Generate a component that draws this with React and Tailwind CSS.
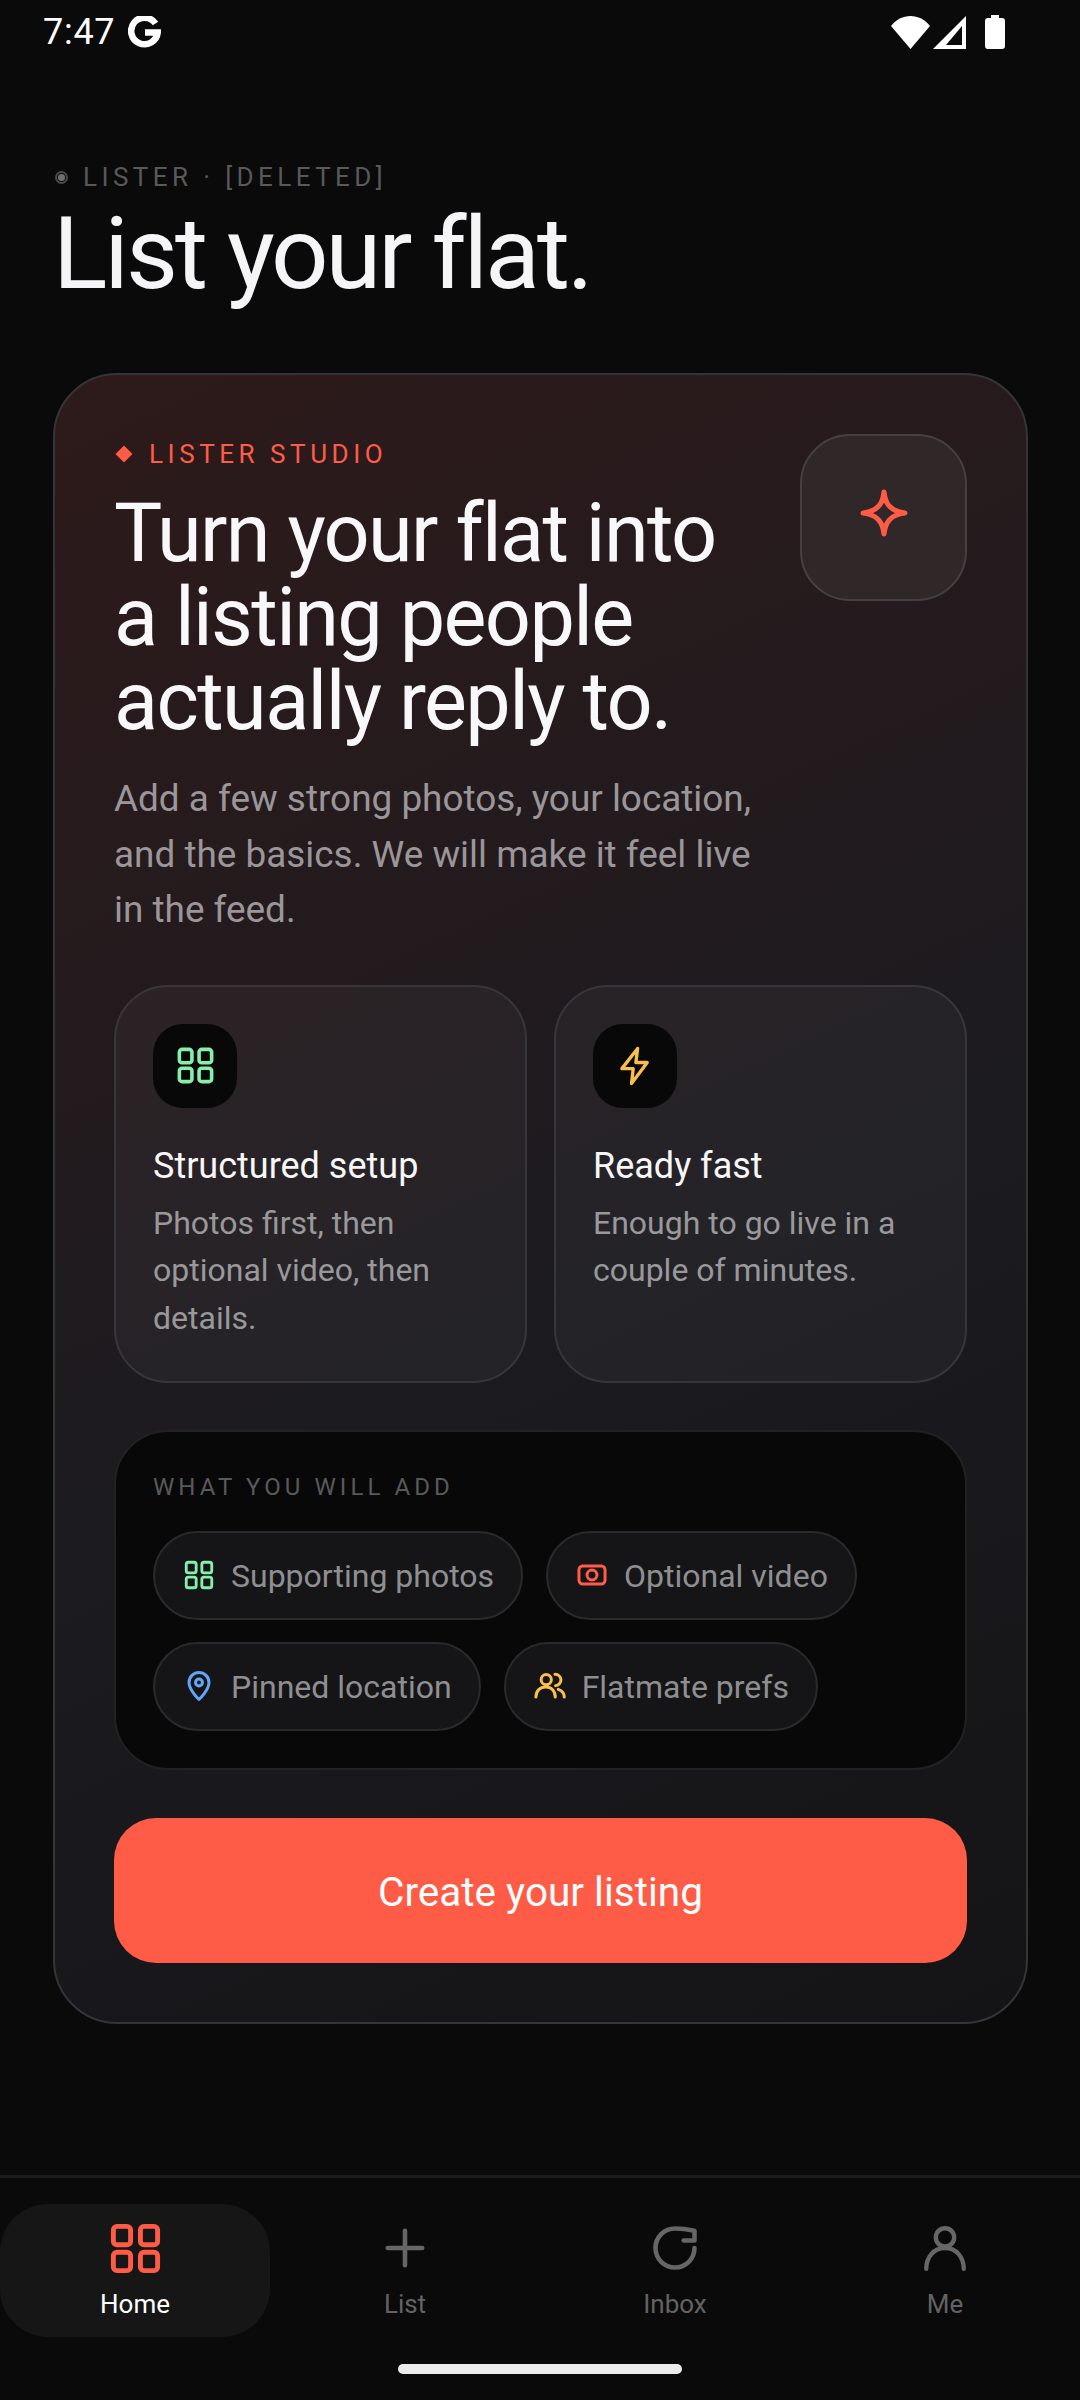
import React from "react";

const GridIcon = ({ className }) => (
  <svg viewBox="0 0 24 24" fill="none" stroke="currentColor" strokeWidth="2" strokeLinejoin="round" className={className}>
    <rect x="3" y="3" width="7" height="7.5" rx="1.5" />
    <rect x="14" y="3" width="7" height="7.5" rx="1.5" />
    <rect x="3" y="13.5" width="7" height="7.5" rx="1.5" />
    <rect x="14" y="13.5" width="7" height="7.5" rx="1.5" />
  </svg>
);

const BoltIcon = ({ className }) => (
  <svg viewBox="0 0 24 24" fill="none" stroke="currentColor" strokeWidth="1.9" strokeLinecap="round" strokeLinejoin="round" className={className}>
    <path d="M13.5 2 4.5 13.5h6.5L10 22l9-12h-6.5L13.5 2Z" />
  </svg>
);

const SparkIcon = ({ className }) => (
  <svg viewBox="0 0 24 24" fill="none" stroke="currentColor" strokeWidth="2.5" strokeLinejoin="round" className={className}>
    <path d="M12 2c.6 6 3.4 9.2 10 10-6.6.8-9.4 4-10 10-.6-6-3.4-9.2-10-10 6.6-.8 9.4-4 10-10Z" />
  </svg>
);

const VideoIcon = ({ className }) => (
  <svg viewBox="0 0 24 24" fill="none" stroke="currentColor" strokeWidth="2" className={className}>
    <rect x="3.3" y="6" width="17.4" height="12" rx="2.5" />
    <circle cx="12" cy="12" r="3.3" />
  </svg>
);

const PinIcon = ({ className }) => (
  <svg viewBox="0 0 24 24" fill="none" stroke="currentColor" strokeWidth="2" strokeLinejoin="round" className={className}>
    <path d="M12 21s-6.65-6.2-6.65-11.35a6.65 6.65 0 0 1 13.3 0C18.65 14.8 12 21 12 21Z" />
    <circle cx="12" cy="9.65" r="2.3" />
  </svg>
);

const PeopleIcon = ({ className }) => (
  <svg viewBox="0 0 24 24" fill="none" stroke="currentColor" strokeWidth="2" strokeLinecap="round" className={className}>
    <circle cx="9.5" cy="7.75" r="3.4" />
    <path d="M2.6 19.3c0-4 2.8-6.7 6.6-6.7s6.3 2.7 6.3 6.7" />
    <path d="M15.3 4.2a3.7 3.7 0 0 1 .4 7.55" />
    <path d="M17.5 14.2c2.4.8 4 2.6 4 5.1" />
  </svg>
);

const PlusIcon = ({ className }) => (
  <svg viewBox="0 0 24 24" fill="none" stroke="currentColor" strokeWidth="2.4" strokeLinecap="round" className={className}>
    <path d="M12 3v18M3 12h18" />
  </svg>
);

const InboxIcon = ({ className }) => (
  <svg viewBox="0 0 24 24" fill="none" stroke="currentColor" strokeWidth="2.1" strokeLinecap="round" strokeLinejoin="round" className={className}>
    <path d="M21 12a9 9 0 1 1-9-9c3 0 6 .4 9 1v4.5h-5" />
  </svg>
);

const PersonIcon = ({ className }) => (
  <svg viewBox="0 0 24 24" fill="none" stroke="currentColor" strokeWidth="2.1" strokeLinecap="round" className={className}>
    <circle cx="12" cy="6.9" r="4.4" />
    <path d="M3 22c0-5.5 3.5-10 9-10s9 4.5 9 10" />
  </svg>
);

const StatusBar = () => (
  <div className="flex items-center justify-between h-[62px] pl-[43px] pr-[75px] pt-[2px] text-white">
    <div className="flex items-center gap-[13px]">
      <span className="text-[36px] leading-none tracking-[0.02em]">7:47</span>
      <svg viewBox="0 0 33 33" fill="none" stroke="currentColor" strokeWidth="6.5" className="w-[33px] h-[33px]">
        <path d="M27.5 7.5A13.3 13.3 0 1 0 29.7 16.5H17" />
      </svg>
    </div>
    <div className="flex items-center">
      <svg viewBox="0 0 39 33" className="w-[39px] h-[33px] fill-white">
        <path d="M0 10C5 3.5 12 0 19.5 0S34 3.5 39 10L19.5 33Z" />
      </svg>
      <svg viewBox="0 0 33 33" className="ml-[3px] w-[33px] h-[33px] fill-white">
        <path fillRule="evenodd" d="M33 0v33H0ZM29 10 13 29h16Z" />
      </svg>
      <svg viewBox="0 0 20 34" className="ml-[19px] w-[20px] h-[34px] fill-white">
        <path d="M6 0h8v3h3a3 3 0 0 1 3 3v25a3 3 0 0 1-3 3H3a3 3 0 0 1-3-3V6a3 3 0 0 1 3-3h3Z" />
      </svg>
    </div>
  </div>
);

const FeatureCard = ({ icon, title, text }) => (
  <div className="flex-1 h-[398px] rounded-[54px] border-2 border-[#37363a] bg-white/[0.04] px-[37px] pt-[37px]">
    <div className="flex items-center justify-center w-[84px] h-[84px] rounded-[30px] bg-[#080808]">{icon}</div>
    <h3 className="mt-[35px] text-[36px] leading-[46px] text-[#f7f7f8]">{title}</h3>
    <p className="mt-[11px] text-[32px] leading-[47.5px] text-[#99989b]">{text}</p>
  </div>
);

const Chip = ({ icon, label }) => (
  <div className="flex items-center h-[89px] gap-[14px] rounded-full border-2 border-[#2a2a2c] bg-[#151517] pl-[26px] pr-[27px]">
    <span className="flex items-center justify-center w-[36px] h-[36px]">{icon}</span>
    <span className="pt-[2px] text-[32px] text-[#8f8f92]">{label}</span>
  </div>
);

const NavItem = ({ icon, label, active }) => (
  <div className={`flex-1 h-[133px] flex flex-col items-center pt-[14px] rounded-[48px] ${active ? "bg-[#161616]" : ""}`}>
    <span className="flex items-center justify-center h-[60px]">{icon}</span>
    <span className={`mt-[8px] text-[26px] leading-[36px] ${active ? "text-white" : "text-[#626263]"}`}>{label}</span>
  </div>
);

export default function App() {
  return (
    <div className="flex flex-col w-[1080px] h-[2400px] bg-[#0a0a0a] font-[Roboto,sans-serif] overflow-hidden">
      <StatusBar />

      <main className="flex-1 pl-[53px] pr-[52px] pt-[99px]">
        <div className="flex items-center gap-[15px] h-[32px] pl-[2px]">
          <span className="flex items-center justify-center w-[13px] h-[13px] rounded-full border-2 border-[#4a4a4a]">
            <span className="w-[7px] h-[7px] rounded-full bg-[#707070]" />
          </span>
          <span className="text-[26px] leading-none tracking-[0.17em] text-[#59595b]">LISTER · [DELETED]</span>
        </div>
        <h1 className="mt-[5px] text-[101px] leading-[112px] tracking-[-0.03em] text-[#f5f5f7]">List your flat.</h1>

        <section className="mt-[63px] w-[975px] h-[1651px] rounded-[64px] border-2 border-[#343538] bg-[linear-gradient(155deg,#2e1a1a_0%,#1c1b20_55%,#141416_100%)] p-[59px]">
          <div className="flex justify-between">
            <div>
              <div className="flex items-center gap-[19px] h-[40px]">
                <span className="w-[12px] h-[12px] rotate-45 bg-[#ff5c47] ml-[4px]" />
                <span className="text-[26px] leading-none tracking-[0.175em] text-[#ff5c47]">LISTER STUDIO</span>
              </div>
              <h2 className="mt-[18px] text-[81px] leading-[84px] tracking-[-0.02em] text-[#f8f8fa] w-[640px]">
                Turn your flat into a listing people actually reply to.
              </h2>
              <p className="mt-[27px] text-[36.9px] leading-[55.5px] text-[#9a9699] w-[670px]">
                Add a few strong photos, your location, and the basics. We will make it feel live in the feed.
              </p>
            </div>
            <div className="flex shrink-0 items-center justify-center w-[167px] h-[167px] rounded-[50px] border-2 border-[#454143] bg-[#2f2728]">
              <SparkIcon className="w-[50px] h-[50px] mb-[10px] text-[#ff5c47]" />
            </div>
          </div>

          <div className="flex gap-[27px] mt-[47px]">
            <FeatureCard
              icon={<GridIcon className="w-[43px] h-[43px] text-[#86efac]" />}
              title="Structured setup"
              text="Photos first, then optional video, then details."
            />
            <FeatureCard
              icon={<BoltIcon className="w-[42px] h-[42px] text-[#fbbf4d]" />}
              title="Ready fast"
              text="Enough to go live in a couple of minutes."
            />
          </div>

          <div className="mt-[47px] h-[340px] rounded-[54px] border-2 border-[#222224] bg-[#080808] px-[37px] pt-[40px]">
            <p className="text-[24px] leading-[30px] tracking-[0.17em] text-[#59595b]">WHAT YOU WILL ADD</p>
            <div className="flex flex-wrap gap-x-[23px] gap-y-[22px] mt-[29px]">
              <Chip icon={<GridIcon className="w-[34px] h-[34px] shrink-0 text-[#86efac]" />} label="Supporting photos" />
              <Chip icon={<VideoIcon className="w-[36px] h-[36px] shrink-0 text-[#ff5c47]" />} label="Optional video" />
              <Chip icon={<PinIcon className="w-[36px] h-[36px] shrink-0 text-[#60a5fa]" />} label="Pinned location" />
              <Chip icon={<PeopleIcon className="w-[36px] h-[36px] shrink-0 text-[#fbbf4d]" />} label="Flatmate prefs" />
            </div>
          </div>

          <button className="mt-[48px] w-full h-[145px] pt-[5px] rounded-[42px] bg-[#ff5c47] text-[40.5px] text-white">
            Create your listing
          </button>
        </section>
      </main>

      <nav className="h-[225px] border-t-[3px] border-[#1c1c1c]">
        <div className="flex pt-[26px]">
          <NavItem active icon={<GridIcon className="w-[59px] h-[59px] text-[#ff5c47]" />} label="Home" />
          <NavItem icon={<PlusIcon className="w-[46px] h-[46px] text-[#666667]" />} label="List" />
          <NavItem icon={<InboxIcon className="w-[52px] h-[52px] text-[#666667]" />} label="Inbox" />
          <NavItem icon={<PersonIcon className="w-[50px] h-[50px] text-[#666667]" />} label="Me" />
        </div>
        <div className="mx-auto mt-[27px] w-[284px] h-[10px] rounded-full bg-[#ececec]" />
      </nav>
    </div>
  );
}
